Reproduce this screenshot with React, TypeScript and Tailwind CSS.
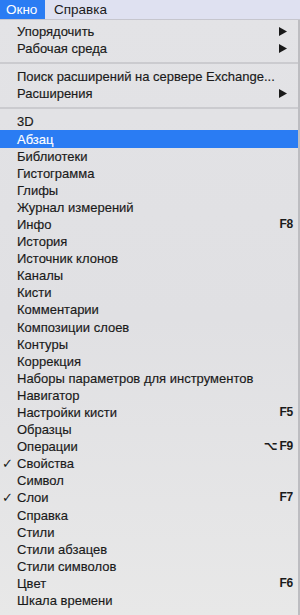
import React from "react"

type Item = {
  label: string
  check?: boolean
  shortcut?: string
  submenu?: boolean
  active?: boolean
}

const topItems: Item[][] = [
  [
    { label: "Упорядочить", submenu: true },
    { label: "Рабочая среда", submenu: true },
  ],
  [
    { label: "Поиск расширений на сервере Exchange..." },
    { label: "Расширения", submenu: true },
  ],
]

const panels: Item[] = [
  { label: "3D" },
  { label: "Абзац", active: true },
  { label: "Библиотеки" },
  { label: "Гистограмма" },
  { label: "Глифы" },
  { label: "Журнал измерений" },
  { label: "Инфо", shortcut: "F8" },
  { label: "История" },
  { label: "Источник клонов" },
  { label: "Каналы" },
  { label: "Кисти" },
  { label: "Комментарии" },
  { label: "Композиции слоев" },
  { label: "Контуры" },
  { label: "Коррекция" },
  { label: "Наборы параметров для инструментов" },
  { label: "Навигатор" },
  { label: "Настройки кисти", shortcut: "F5" },
  { label: "Образцы" },
  { label: "Операции", shortcut: "⌥F9" },
  { label: "Свойства", check: true },
  { label: "Символ" },
  { label: "Слои", check: true, shortcut: "F7" },
  { label: "Справка" },
  { label: "Стили" },
  { label: "Стили абзацев" },
  { label: "Стили символов" },
  { label: "Цвет", shortcut: "F6" },
  { label: "Шкала времени" },
]

function Row({ item }: { item: Item }) {
  return (
    <div
      className={`flex items-center h-[17.1px] pl-[17px] pr-[5px] relative ${
        item.active ? "bg-[#2a7cf3] text-white" : "text-[#1a1a1a]"
      }`}
    >
      {item.check && (
        <span className="absolute left-[2px] top-0 text-[13px] font-bold leading-[17px] font-['DejaVu_Sans',sans-serif]">
          ✓
        </span>
      )}
      <span className="flex-1 whitespace-nowrap [-webkit-text-stroke:0.15px]">{item.label}</span>
      {item.shortcut && (
        <span className="text-[12px] font-bold tracking-[-0.2px]">
          {item.shortcut.startsWith("⌥") ? (
            <>
              <span className="font-['DejaVu_Sans',sans-serif] font-bold mr-[2px]">⌥</span>
              {item.shortcut.slice(1)}
            </>
          ) : (
            item.shortcut
          )}
        </span>
      )}
      {item.submenu && (
        <svg width="8" height="9" viewBox="0 0 8 9" className="mr-[6px]">
          <path d="M0 0 L8 4.5 L0 9 Z" fill="#1a1a1a" />
        </svg>
      )}
    </div>
  )
}

function Separator() {
  return (
    <div className="h-[11px] flex items-center">
      <div className="w-full h-[2px] bg-[#cbcbcf]" />
    </div>
  )
}

export default function App() {
  return (
    <div className="w-[300px] h-[615px] overflow-hidden font-['Liberation_Sans',Arial,sans-serif] text-[13px] leading-[17px] bg-[#e6e6e8]">
      {/* Menu bar */}
      <div className="flex h-[20px] bg-[#dfe1f1] border-b border-[#c6c6ce]">
        <div className="bg-[#2a7cf3] text-white px-[6px] w-[45px] leading-[19px] text-[13.5px]">Окно</div>
        <div className="px-[9px] leading-[19px] text-[#1a1a1a] text-[13.5px]">Справка</div>
      </div>

      {/* Dropdown */}
      <div className="h-[595px] pt-[3px] border-r-2 border-[#bdbdc1] bg-gradient-to-b from-[#e3e3e6] via-[#e0e0e3] to-[#e8e8e8]">
        {topItems.map((group, i) => (
          <div key={i}>
            {group.map((item) => (
              <Row key={item.label} item={item} />
            ))}
            <Separator />
          </div>
        ))}
        {panels.map((item) => (
          <Row key={item.label} item={item} />
        ))}
      </div>
    </div>
  )
}
